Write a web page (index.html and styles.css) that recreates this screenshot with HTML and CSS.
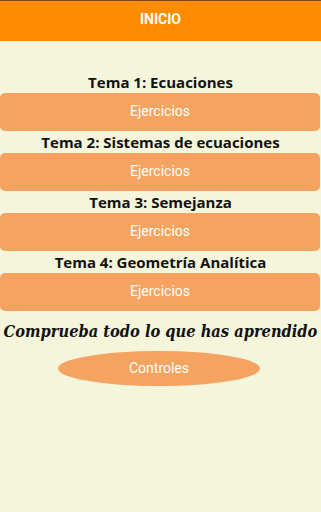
FILE: index.html
```html
<!DOCTYPE html>
<html lang="es">
<head>
<meta charset="utf-8">
<link rel="stylesheet" href="styles.css">
</head>
<body>
<header class="bar"><span class="bar-title">INICIO</span></header>
<main class="content">
  <section class="topic">
    <h2 class="topic-title">Tema 1: Ecuaciones</h2>
    <button class="btn">Ejercicios</button>
  </section>
  <section class="topic">
    <h2 class="topic-title">Tema 2: Sistemas de ecuaciones</h2>
    <button class="btn">Ejercicios</button>
  </section>
  <section class="topic">
    <h2 class="topic-title">Tema 3: Semejanza</h2>
    <button class="btn">Ejercicios</button>
  </section>
  <section class="topic">
    <h2 class="topic-title">Tema 4: Geometría Analítica</h2>
    <button class="btn">Ejercicios</button>
  </section>
  <p class="check">Comprueba todo lo que has aprendido</p>
  <button class="oval">Controles</button>
</main>
</body>
</html>
```
FILE: styles.css
```css
html, body {
  margin: 0;
  padding: 0;
}
body {
  width: 321px;
  height: 512px;
  background: #f5f5dc;
  font-family: Roboto, "Liberation Sans", sans-serif;
  overflow: hidden;
}
.bar {
  height: 40px;
  background: #ff8c00;
  border-top: 1px solid #7a4a16;
  display: flex;
  align-items: center;
  justify-content: center;
}
.bar-title {
  color: #fff;
  font-weight: bold;
  font-size: 14px;
  margin-top: -4px;
}
.content {
  display: flex;
  flex-direction: column;
  align-items: stretch;
  padding-top: 30px;
}
.topic {
  display: flex;
  flex-direction: column;
}
.topic-title {
  margin: 0;
  height: 22px;
  line-height: 22px;
  text-align: center;
  font-family: "Open Sans", sans-serif;
  font-weight: bold;
  font-size: 15px;
  color: #111;
}
.btn {
  height: 38px;
  margin: 0 1px 0 0;
  border: none;
  border-radius: 5px;
  background: #f4a460;
  color: #fff;
  font-family: Roboto, sans-serif;
  font-size: 14px;
  padding: 0 0 2px;
}
.check {
  margin: 10px 0 0;
  height: 22px;
  line-height: 22px;
  text-align: center;
  font-family: "DejaVu Serif Condensed", "DejaVu Serif", serif;
  font-stretch: condensed;
  font-style: italic;
  font-weight: bold;
  font-size: 16.3px;
  color: #111;
  white-space: nowrap;
}
.oval {
  align-self: flex-start;
  margin: 8px 0 0 58px;
  width: 202px;
  height: 35px;
  border: none;
  border-radius: 50%;
  background: #f4a460;
  color: #fff;
  font-family: Roboto, sans-serif;
  font-size: 14px;
  padding: 0 0 1px;
}
```
